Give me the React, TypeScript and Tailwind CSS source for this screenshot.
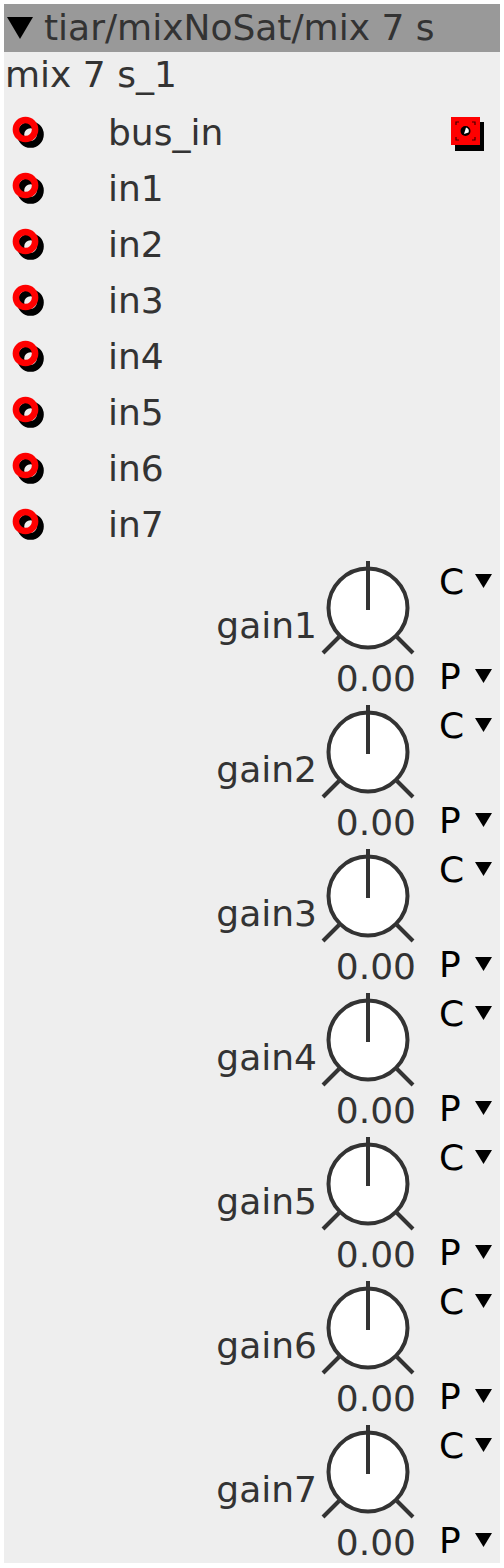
import React from "react";

const font = { fontFamily: '"DejaVu Sans", "Liberation Sans", sans-serif' };

function InJack() {
  return (
    <svg width="44" height="44" viewBox="0 0 44 44" className="block">
      <circle cx="20.5" cy="21.5" r="9.8" fill="none" stroke="#000" strokeWidth="7" />
      <circle cx="15.5" cy="16.5" r="9.6" fill="none" stroke="#ff0000" strokeWidth="6.5" />
    </svg>
  );
}

function OutJack() {
  return (
    <svg width="40" height="40" viewBox="0 0 40 40" className="block">
      <rect x="6" y="7" width="29" height="29" fill="#000" />
      <rect x="2" y="2" width="29" height="28" fill="#ff0000" />
      <path d="M7 10 V7 H10 M23 7 H26 V10 M26 22 V25 H23 M10 25 H7 V22" fill="none" stroke="#400" strokeWidth="1.2" />
      <circle cx="16.5" cy="16" r="5" fill="#000" />
      <path d="M17 12.5 A3.5 3.5 0 0 1 19.5 17.5 L15 19 Z" fill="#fff" />
    </svg>
  );
}

function Knob() {
  return (
    <svg width="112" height="106" viewBox="0 0 112 106" className="block">
      <circle cx="52" cy="55" r="39.5" fill="#fff" stroke="#333" strokeWidth="4" />
      <line x1="52" y1="8" x2="52" y2="57" stroke="#333" strokeWidth="4" />
      <line x1="23" y1="84" x2="7" y2="100" stroke="#333" strokeWidth="4" />
      <line x1="81" y1="84" x2="97" y2="100" stroke="#333" strokeWidth="4" />
    </svg>
  );
}

function Tri() {
  return (
    <svg width="17" height="15" viewBox="0 0 17 15" className="block">
      <polygon points="0,0 17,0 8.5,14" fill="#000" />
    </svg>
  );
}

export default function App() {
  const ins = ["bus_in", "in1", "in2", "in3", "in4", "in5", "in6", "in7"];
  const gains = [1, 2, 3, 4, 5, 6, 7];
  return (
    <div className="bg-white w-[504px] h-[1568px] pt-[4px] pl-[4px]" style={font}>
      <div className="w-[496px] h-[1559px] bg-[#eeeeee] text-[36px] leading-[40px] text-[#333333]">
        <div className="h-[48px] bg-[#999999] flex items-center">
          <div className="pl-[3px] w-[40px]">
            <svg width="26" height="23" viewBox="0 0 26 23" className="block">
              <polygon points="0,0 26,0 13,22" fill="#000" />
            </svg>
          </div>
          <span className="whitespace-nowrap">tiar/mixNoSat/mix 7 s</span>
        </div>
        <div className="h-[53px] pt-[3px] pl-[1px] whitespace-nowrap">mix 7 s_1</div>
        {ins.map((n, i) => (
          <div key={n} className="h-[56px] flex items-center">
            <div className="w-[104px] pl-[6px] pt-[4px] flex items-center">
              <InJack />
            </div>
            <div className="flex-1 whitespace-nowrap">{n}</div>
            {i === 0 && (
              <div className="w-[51px] pt-[3px]">
                <OutJack />
              </div>
            )}
          </div>
        ))}
        {gains.map((g) => (
          <div key={g} className="h-[144px] flex">
            <div className="w-[313px] pt-[53px] text-right whitespace-nowrap">gain{g}</div>
            <div className="w-[111px] flex flex-col">
              <div className="-ml-[1px]"><Knob /></div>
              <div className="text-right pr-[12px] whitespace-nowrap">0.00</div>
            </div>
            <div className="flex-1 pl-[11px] flex flex-col justify-between text-black">
              <div className="flex items-start pt-[9px]">
                <span className="w-[36px]">C</span>
                <div className="pt-[12px]"><Tri /></div>
              </div>
              <div className="flex items-start">
                <span className="w-[36px]">P</span>
                <div className="pt-[12px]"><Tri /></div>
              </div>
            </div>
          </div>
        ))}
      </div>
    </div>
  );
}
